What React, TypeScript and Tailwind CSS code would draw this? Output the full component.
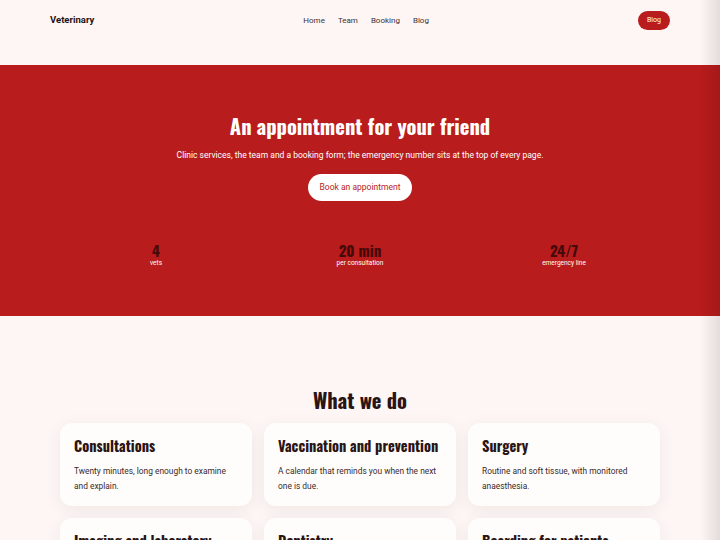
import React from 'react';

const display = { fontFamily: '"Oswald", "Liberation Sans Narrow", "DejaVu Sans Condensed", "Roboto", sans-serif' };

const services = [
  { title: 'Consultations', text: 'Twenty minutes, long enough to examine and explain.' },
  { title: 'Vaccination and prevention', text: 'A calendar that reminds you when the next one is due.' },
  { title: 'Surgery', text: 'Routine and soft tissue, with monitored anaesthesia.' },
  { title: 'Imaging and laboratory', text: 'X-ray, ultrasound and blood work on site, results the same day.' },
  { title: 'Dentistry', text: 'Scaling, extractions and advice for home care.' },
  { title: 'Boarding for patients', text: 'Supervised stays for animals recovering after treatment.' },
];

const stats = [
  { value: '4', label: 'vets' },
  { value: '20 min', label: 'per consultation' },
  { value: '24/7', label: 'emergency line' },
];

export default function App() {
  return (
    <div className="min-h-screen bg-[#fdf6f4] text-[#2a1717]" style={{ fontFamily: 'Roboto, "Liberation Sans", sans-serif' }}>
      {/* Header */}
      <header className="h-[65px] pt-[11px]">
        <div className="w-[620px] mx-auto flex items-center justify-between">
          <span className="text-[9.5px] font-bold text-[#1f1414]">Veterinary</span>
          <nav className="flex items-center gap-[13px] text-[8px] text-[#3d3030]">
            <a>Home</a>
            <a>Team</a>
            <a>Booking</a>
            <a>Blog</a>
          </nav>
          <button className="h-[19px] px-[9px] rounded-full bg-[#b91c1c] text-white text-[7px]">Blog</button>
        </div>
      </header>

      {/* Hero */}
      <section className="bg-[#b91c1c] pt-[49px] pb-[49px] text-center">
        <h1 className="text-[20.5px] leading-[24px] font-bold text-white" style={display}>
          An appointment for your friend
        </h1>
        <p className="mt-[11px] text-[8.5px] leading-[12px] text-white">
          Clinic services, the team and a booking form; the emergency number sits at the top of every page.
        </p>
        <button className="mt-[13px] h-[27px] px-[12px] rounded-full bg-white text-[#b91c1c] text-[8.5px]">
          Book an appointment
        </button>
        <div className="mt-[40px] w-[600px] mx-auto grid grid-cols-3 gap-[12px]">
          {stats.map((s) => (
            <div key={s.label} className="flex flex-col items-center">
              <span className="text-[15px] leading-[18px] font-bold text-[#450a0a]" style={display}>{s.value}</span>
              <span className="text-[6.5px] leading-[8px] text-white">{s.label}</span>
            </div>
          ))}
        </div>
      </section>

      {/* Services */}
      <section className="pt-[70px] pb-[40px]">
        <h2 className="text-center text-[20.5px] leading-[28px] font-bold text-[#2a1414]" style={display}>What we do</h2>
        <div className="mt-[9px] w-[600px] mx-auto grid grid-cols-3 gap-[12px]">
          {services.map((s) => (
            <div key={s.title} className="bg-[#fffdfc] rounded-[12px] px-[14px] pt-[12px] pb-[12px] shadow-[0_4px_18px_rgba(60,20,20,0.06)]">
              <h3 className="text-[14.5px] leading-[22px] font-bold text-[#2a1414]" style={display}>{s.title}</h3>
              <p className="mt-[7px] text-[8.4px] leading-[15px] text-[#3a2a2a]">{s.text}</p>
            </div>
          ))}
        </div>
      </section>

      {/* scrollbar-like edge shade */}
      <div className="fixed top-0 right-0 h-full w-[20px] pointer-events-none bg-gradient-to-r from-transparent to-black/10" />
    </div>
  );
}
